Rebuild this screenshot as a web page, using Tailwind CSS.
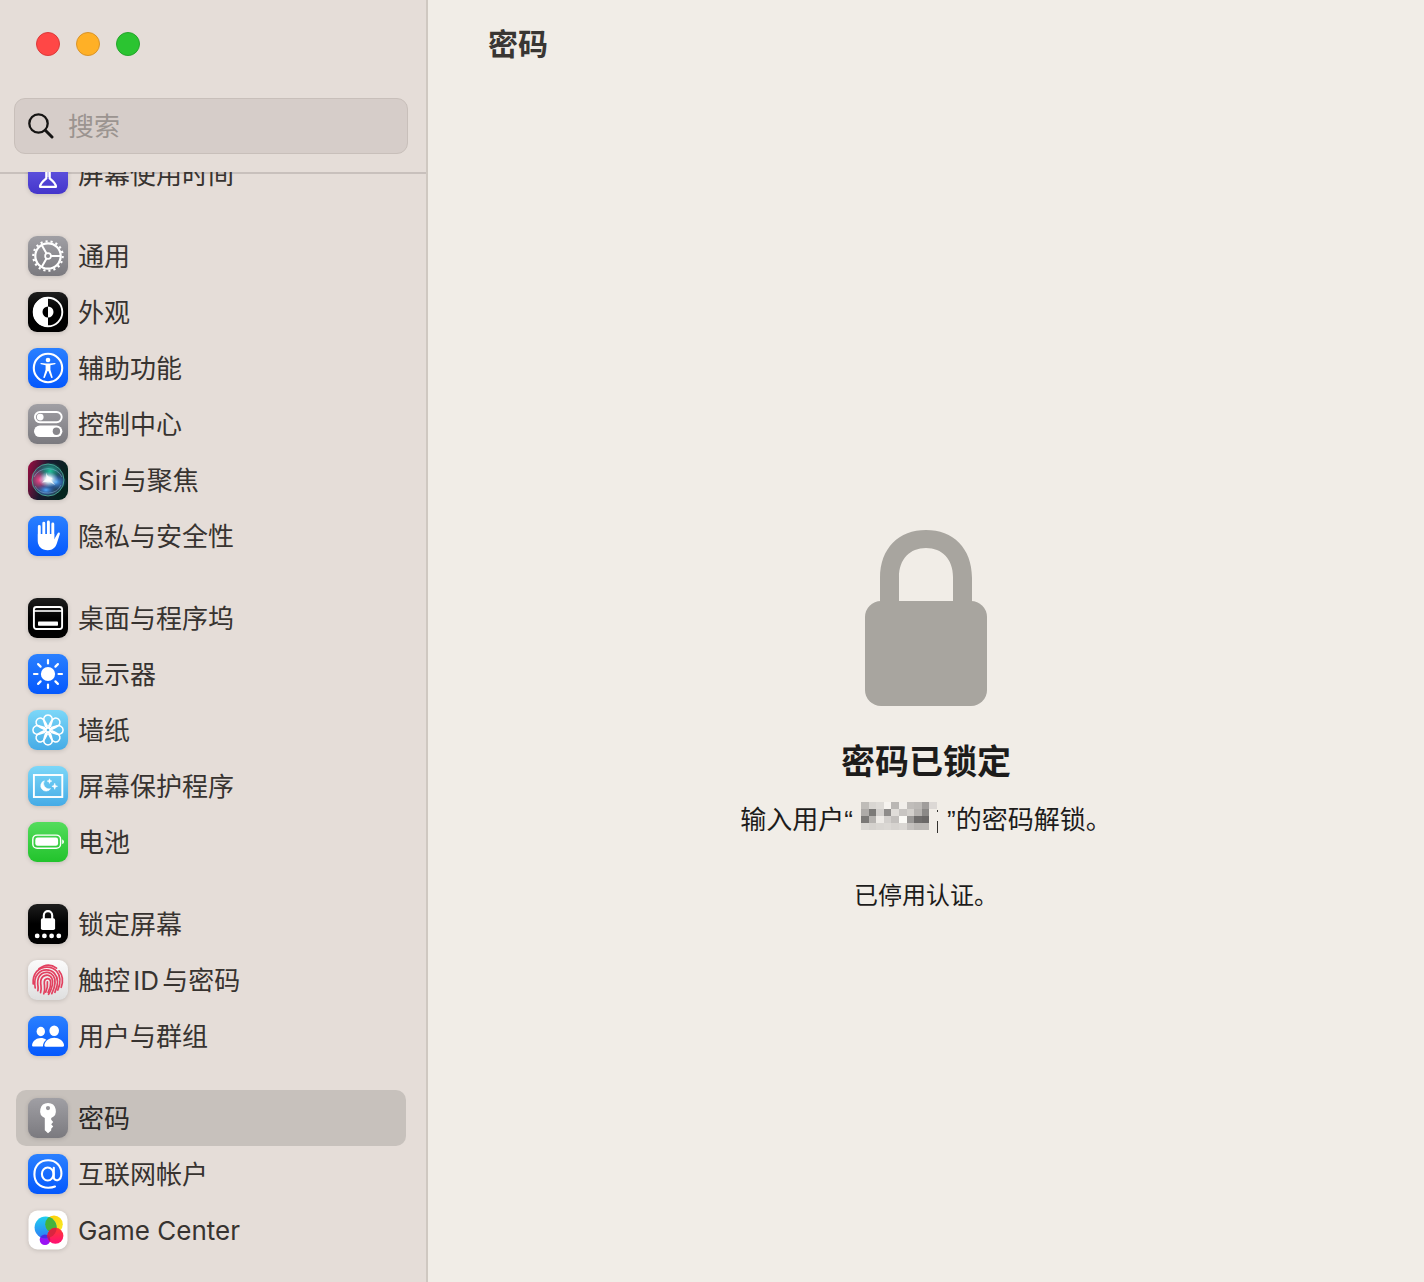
<!DOCTYPE html>
<html lang="zh-CN">
<head>
  <meta charset="UTF-8">
  <meta name="viewport" content="width=device-width, initial-scale=1.0">
  <title>密码</title>
  <script src="https://cdn.jsdelivr.net/npm/@tailwindcss/browser@4"></script>
</head>
<body class="flex h-screen overflow-hidden bg-[#f1ede7] font-['Inter','Noto_Sans_CJK_SC',sans-serif] text-[#1d1c1b]">

  <!-- Shared icon gradients -->
  <svg class="absolute size-0" aria-hidden="true">
    <defs>
      <linearGradient id="gray" x2="0" y2="1"><stop stop-color="#a09fa4"/><stop offset="1" stop-color="#7b7a7f"/></linearGradient>
      <linearGradient id="black" x2="0" y2="1"><stop stop-color="#1e1e1e"/><stop offset=".5" stop-color="#000"/></linearGradient>
      <linearGradient id="blue" x2="0" y2="1"><stop stop-color="#2a80ff"/><stop offset="1" stop-color="#0458fd"/></linearGradient>
      <linearGradient id="sky" x2="0" y2="1"><stop stop-color="#7cd7f8"/><stop offset="1" stop-color="#45abe6"/></linearGradient>
      <linearGradient id="green" x2="0" y2="1"><stop stop-color="#53dc5c"/><stop offset="1" stop-color="#22c32c"/></linearGradient>
      <linearGradient id="light" x2="0" y2="1"><stop stop-color="#fbfbfb"/><stop offset="1" stop-color="#dfdfdf"/></linearGradient>
      <linearGradient id="indigo" x2="0" y2="1"><stop stop-color="#6d63e8"/><stop offset="1" stop-color="#4435cb"/></linearGradient>
      <linearGradient id="siri" y2=".3"><stop stop-color="#a10d42"/><stop offset=".5" stop-color="#1a1a30"/><stop offset="1" stop-color="#04251f"/></linearGradient>
      <radialGradient id="glow"><stop stop-color="#fff"/><stop offset=".35" stop-color="#e8fbff" stop-opacity=".9"/><stop offset="1" stop-color="#9fd8ff" stop-opacity="0"/></radialGradient>
      <radialGradient id="pink"><stop stop-color="#ff4d90"/><stop offset="1" stop-color="#e0246b" stop-opacity="0"/></radialGradient>
      <radialGradient id="teal"><stop stop-color="#1fc79b"/><stop offset="1" stop-color="#128f76" stop-opacity="0"/></radialGradient>
      <radialGradient id="azure"><stop stop-color="#52a9fb"/><stop offset="1" stop-color="#2355c8" stop-opacity="0"/></radialGradient>
      <linearGradient id="gcBlue" x2="0" y2="1"><stop stop-color="#1fd0ef"/><stop offset="1" stop-color="#2f7bf6"/></linearGradient>
      <linearGradient id="gcYellow" x2="1" y2="1"><stop stop-color="#ffc800"/><stop offset="1" stop-color="#f6ee2a"/></linearGradient>
      <linearGradient id="gcRed" x2="0" y2="1"><stop stop-color="#ff3b30"/><stop offset="1" stop-color="#ff0f75"/></linearGradient>
    </defs>
  </svg>

  <!-- Sidebar -->
  <aside class="flex w-[428px] shrink-0 flex-col border-r-2 border-[#cfc8c1] bg-[#e5ddd8]">
    <div class="flex gap-4 px-9 pt-8">
      <button aria-label="关闭" class="size-6 rounded-full border border-[#dc3a3a] bg-[#ff4746]"></button>
      <button aria-label="最小化" class="size-6 rounded-full border border-[#d9942a] bg-[#ffb026]"></button>
      <button aria-label="缩放" class="size-6 rounded-full border border-[#25a52c] bg-[#2bc431]"></button>
    </div>

    <label class="mt-[42px] mr-[18px] mb-[18px] ml-[14px] flex h-14 items-center gap-[14px] rounded-[11px] border border-[#c8bfba] bg-[#d6cdc9] px-[13px]">
      <svg class="size-[26px] shrink-0" viewBox="0 0 26 26" fill="none" stroke="#151413" stroke-linecap="round" aria-hidden="true">
        <circle cx="10.500" cy="10.500" r="9.200" stroke-width="2.300"/>
        <path d="M17.300 17.300 24 24" stroke-width="3"/>
      </svg>
      <input type="text" aria-label="搜索" placeholder="搜索" class="w-full min-w-0 bg-transparent text-[26px] outline-none placeholder:text-[#9b9490]">
    </label>

    <nav class="min-h-0 flex-1 overflow-hidden text-[26px] leading-9 text-[#373330] shadow-[inset_0_2px_0_#c8c0bc] [text-autospace:normal]">
      <ul class="-mt-[26px] mr-5 ml-4">
        <li>
          <a href="#" class="flex h-14 items-center gap-[10px] rounded-[10px] px-3">
            <svg class="size-10 shrink-0 drop-shadow-sm" viewBox="0 0 40 40" aria-hidden="true">
              <rect width="40" height="40" rx="9" fill="url(#indigo)"/>
              <path d="M12.500 7h15c-.5 3-3 5-5.800 7.500v10c2.500 2 6 4.500 6.300 8.300H12c.3-3.800 3.800-6.300 6.300-8.300v-10C15.500 12 13 10 12.500 7z" fill="none" stroke="#fff" stroke-width="2.200" stroke-linejoin="round"/>
              <path d="M20 14v9" stroke="#fff" stroke-width="1"/>
            </svg>
            <span class="pt-0.5">屏幕使用时间</span>
          </a>
        </li>
      </ul>

      <ul class="mt-[26px] mr-5 ml-4">
        <li>
          <a href="#" class="flex h-14 items-center gap-[10px] rounded-[10px] px-3">
            <svg class="size-10 shrink-0 drop-shadow-sm" viewBox="0 0 40 40" aria-hidden="true">
              <rect width="40" height="40" rx="9" fill="url(#gray)"/>
              <g fill="none" stroke="#fff">
                <circle cx="20" cy="20" r="12.700" stroke-width="2.200"/>
                <circle cx="20" cy="20" r="14.700" stroke-width="2.200" pathLength="72" stroke-dasharray="1.700 2.300"/>
                <circle cx="20" cy="20" r="2.900" stroke-width="1.700"/>
                <path d="M23 20h9.500M18.500 17.400 13.800 9.200M18.500 22.600l-4.700 8.200" stroke-width="2"/>
              </g>
            </svg>
            <span class="pt-0.5">通用</span>
          </a>
        </li>
        <li>
          <a href="#" class="flex h-14 items-center gap-[10px] rounded-[10px] px-3">
            <svg class="size-10 shrink-0 drop-shadow-sm" viewBox="0 0 40 40" aria-hidden="true">
              <rect width="40" height="40" rx="9" fill="url(#black)"/>
              <circle cx="20" cy="20" r="14.300" fill="none" stroke="#fff" stroke-width="1.900"/>
              <path d="M20 5v9.500a5.500 5.500 0 0 0 0 11V35a15 15 0 0 1 0-30z" fill="#fff"/>
              <path d="M20 14.500a5.500 5.500 0 0 1 0 11z" fill="#fff"/>
            </svg>
            <span class="pt-0.5">外观</span>
          </a>
        </li>
        <li>
          <a href="#" class="flex h-14 items-center gap-[10px] rounded-[10px] px-3">
            <svg class="size-10 shrink-0 drop-shadow-sm" viewBox="0 0 40 40" aria-hidden="true">
              <rect width="40" height="40" rx="9" fill="url(#blue)"/>
              <circle cx="20" cy="20" r="14.200" fill="none" stroke="#fff" stroke-width="2.100"/>
              <circle cx="20" cy="12" r="2.300" fill="#fff"/>
              <path d="M13.200 14.900 18 15.500h4l4.800-.6c1-.1 1.100 1.100.2 1.300l-4.600 1.100v4.400l2.200 7.200c.3 1.100-1.100 1.500-1.500.5L20.400 23h-.8l-2.700 6.400c-.4 1-1.800.6-1.500-.5l2.200-7.200v-4.400L13 16.200c-.9-.2-.8-1.400.2-1.300z" fill="#fff"/>
            </svg>
            <span class="pt-0.5">辅助功能</span>
          </a>
        </li>
        <li>
          <a href="#" class="flex h-14 items-center gap-[10px] rounded-[10px] px-3">
            <svg class="size-10 shrink-0 drop-shadow-sm" viewBox="0 0 40 40" aria-hidden="true">
              <rect width="40" height="40" rx="9" fill="url(#gray)"/>
              <rect x="6.900" y="8" width="26.800" height="10.200" rx="5.100" fill="none" stroke="#fff" stroke-width="1.900"/>
              <circle cx="12.200" cy="13.100" r="3.400" fill="#fff"/>
              <rect x="6" y="21.500" width="28.400" height="11.600" rx="5.800" fill="#fff"/>
              <circle cx="28.400" cy="27.300" r="3.700" fill="#87868b"/>
            </svg>
            <span class="pt-0.5">控制中心</span>
          </a>
        </li>
        <li>
          <a href="#" class="flex h-14 items-center gap-[10px] rounded-[10px] px-3">
            <svg class="size-10 shrink-0 drop-shadow-sm" viewBox="0 0 40 40" aria-hidden="true">
              <rect width="40" height="40" rx="9" fill="url(#siri)"/>
              <circle cx="20" cy="20" r="16" fill="#2f5068" fill-opacity=".75"/>
              <ellipse cx="12" cy="20" rx="11" ry="11" fill="url(#pink)"/>
              <ellipse cx="22" cy="11" rx="12" ry="9" fill="url(#teal)"/>
              <ellipse cx="28" cy="22" rx="11" ry="8" fill="url(#azure)"/>
              <ellipse cx="18" cy="30" rx="10" ry="6" fill="url(#azure)"/>
              <circle cx="20" cy="20" r="16" fill="none" stroke="#4fb8a0" stroke-opacity=".8"/>
              <path d="M6 17a15 13 0 0 1 28 0M7 26a14 12 0 0 0 26-1" fill="none" stroke="#8bb5dd" stroke-opacity=".5"/>
              <ellipse cx="20.500" cy="19.500" rx="10" ry="8" fill="url(#glow)"/>
              <path d="M18 12.500c1 3.500 3 5 6.500 5.500l-1.500 2 4 5-6-3.500-7 1 4.500-4z" fill="#fff" fill-opacity=".8"/>
            </svg>
            <span class="pt-0.5">Siri与聚焦</span>
          </a>
        </li>
        <li>
          <a href="#" class="flex h-14 items-center gap-[10px] rounded-[10px] px-3">
            <svg class="size-10 shrink-0 drop-shadow-sm" viewBox="0 0 40 40" aria-hidden="true">
              <rect width="40" height="40" rx="9" fill="url(#blue)"/>
              <path d="M11.300 20v6.500M11.300 10.500V22M15.800 7.200V22M20.400 6V22M24.800 8V22" fill="none" stroke="#fff" stroke-width="2.900" stroke-linecap="round"/>
              <path d="M9.850 18h16.400v5.200l3.300-5.800c.8-1.400 2.700-.9 2.300.7L29.300 26c-1.300 5.300-4.400 8.200-9.500 8.200-6.300 0-9.950-4-9.950-9.800z" fill="#fff"/>
            </svg>
            <span class="pt-0.5">隐私与安全性</span>
          </a>
        </li>
      </ul>

      <ul class="mt-[26px] mr-5 ml-4">
        <li>
          <a href="#" class="flex h-14 items-center gap-[10px] rounded-[10px] px-3">
            <svg class="size-10 shrink-0 drop-shadow-sm" viewBox="0 0 40 40" aria-hidden="true">
              <rect width="40" height="40" rx="9" fill="url(#black)"/>
              <rect x="5.900" y="9" width="28.200" height="22" rx="2.500" fill="none" stroke="#fff" stroke-width="1.900"/>
              <path d="M6 13h28" stroke="#fff" stroke-width="1.600"/>
              <rect x="10" y="23.400" width="20" height="4.400" rx=".8" fill="#fff"/>
            </svg>
            <span class="pt-0.5">桌面与程序坞</span>
          </a>
        </li>
        <li>
          <a href="#" class="flex h-14 items-center gap-[10px] rounded-[10px] px-3">
            <svg class="size-10 shrink-0 drop-shadow-sm" viewBox="0 0 40 40" aria-hidden="true">
              <rect width="40" height="40" rx="9" fill="url(#blue)"/>
              <circle cx="20" cy="20" r="7.100" fill="#fff"/>
              <path d="M20 6v3.500M20 30.500V34M6 20h3.500M30.500 20H34M10.100 10.100l2.500 2.500M27.400 27.400l2.500 2.500M29.900 10.100l-2.500 2.500M12.600 27.400l-2.500 2.500" stroke="#fff" stroke-width="2.200" stroke-linecap="round"/>
            </svg>
            <span class="pt-0.5">显示器</span>
          </a>
        </li>
        <li>
          <a href="#" class="flex h-14 items-center gap-[10px] rounded-[10px] px-3">
            <svg class="size-10 shrink-0 drop-shadow-sm" viewBox="0 0 40 40" aria-hidden="true">
              <defs><path id="petal" d="M17.800 17 16.300 12.500C14.300 8 17 4.900 20 4.900s5.700 3.100 3.700 7.600L22.200 17M16.500 12.500 21.500 21M23.500 12.500 18.500 21"/></defs>
              <rect width="40" height="40" rx="9" fill="url(#sky)"/>
              <g fill="none" stroke="#fff" stroke-width="1.500">
                <use href="#petal"/>
                <use href="#petal" transform="rotate(45 20 20)"/>
                <use href="#petal" transform="rotate(90 20 20)"/>
                <use href="#petal" transform="rotate(135 20 20)"/>
                <use href="#petal" transform="rotate(180 20 20)"/>
                <use href="#petal" transform="rotate(225 20 20)"/>
                <use href="#petal" transform="rotate(270 20 20)"/>
                <use href="#petal" transform="rotate(315 20 20)"/>
              </g>
              <circle cx="20" cy="20" r="1.300" fill="#5dbdec"/>
            </svg>
            <span class="pt-0.5">墙纸</span>
          </a>
        </li>
        <li>
          <a href="#" class="flex h-14 items-center gap-[10px] rounded-[10px] px-3">
            <svg class="size-10 shrink-0 drop-shadow-sm" viewBox="0 0 40 40" aria-hidden="true">
              <rect width="40" height="40" rx="9" fill="url(#sky)"/>
              <rect x="5.900" y="9" width="28.400" height="22" fill="none" stroke="#fff" stroke-width="1.900"/>
              <path d="M16.300 14.800a5.300 5.300 0 1 0 6.200 7.900 5.400 5.400 0 0 1-6.200-7.900zM21.500 12.800l.6 1.700 1.700.6-1.700.6-.6 1.700-.6-1.700-1.700-.6 1.700-.6zM26.700 17.300l.7 2.300 2.100.7-2.100.7-.7 2.300-.7-2.300-2.100-.7 2.100-.7z" fill="#fff" stroke="#fff" stroke-width=".6"/>
            </svg>
            <span class="pt-0.5">屏幕保护程序</span>
          </a>
        </li>
        <li>
          <a href="#" class="flex h-14 items-center gap-[10px] rounded-[10px] px-3">
            <svg class="size-10 shrink-0 drop-shadow-sm" viewBox="0 0 40 40" aria-hidden="true">
              <rect width="40" height="40" rx="9" fill="url(#green)"/>
              <rect x="4.800" y="13.100" width="27.800" height="13.200" rx="4.300" fill="none" stroke="#fff" stroke-width="1.400"/>
              <rect x="7.300" y="15.600" width="22.800" height="8.200" rx="2.300" fill="#fff"/>
              <path d="M34.200 17.400c2.300.6 2.300 4 0 4.600z" fill="#fff"/>
            </svg>
            <span class="pt-0.5">电池</span>
          </a>
        </li>
      </ul>

      <ul class="mt-[26px] mr-5 ml-4">
        <li>
          <a href="#" class="flex h-14 items-center gap-[10px] rounded-[10px] px-3">
            <svg class="size-10 shrink-0 drop-shadow-sm" viewBox="0 0 40 40" aria-hidden="true">
              <rect width="40" height="40" rx="9" fill="url(#black)"/>
              <path d="M15.800 15v-3.500c0-5.900 8.400-5.900 8.400 0V15" fill="none" stroke="#fff" stroke-width="2.100"/>
              <rect x="12.900" y="14.300" width="14.200" height="11.700" rx="1.800" fill="#fff"/>
              <g fill="#fff"><circle cx="9.200" cy="31.900" r="2.400"/><circle cx="16.400" cy="31.900" r="2.400"/><circle cx="23.600" cy="31.900" r="2.400"/><circle cx="30.800" cy="31.900" r="2.400"/></g>
            </svg>
            <span class="pt-0.5">锁定屏幕</span>
          </a>
        </li>
        <li>
          <a href="#" class="flex h-14 items-center gap-[10px] rounded-[10px] px-3">
            <svg class="size-10 shrink-0 drop-shadow-sm" viewBox="0 0 40 40" aria-hidden="true">
              <rect width="40" height="40" rx="9" fill="url(#light)"/>
              <g fill="none" stroke="#e2405f" stroke-width="1.700" stroke-linecap="round">
                <path d="M11 8.700C17.500 3.800 24 4.600 28.500 8.200M31 10.800c4 4.900 4.500 10.200 2.200 16.500"/>
                <path d="M5.200 24c-.5-5 .8-9.300 3.600-12.700C14.500 5.500 24 6 28.700 11.200c3.900 4.600 4.200 11.300 1.100 18.800"/>
                <path d="M7.200 27.800C6 21.500 7 16.800 10 13.600c4.500-5 12.300-4.700 16.400-.3 4 4.400 4 11.200.5 19"/>
                <path d="M9.900 30.600c.7-3 0-4.300-.2-6.600-.4-5 1-8.300 4-10.300 3.900-2.600 9-1.400 11.600 2 2.800 4 2.200 10.200-1.500 18"/>
                <path d="M12.600 32.600c1.300-4 .3-6.400.1-9.300-.3-4.200 1.400-6.600 4-7.700 3-1.200 6 .2 7.200 2.700 1.700 3.800.4 9.500-3.300 16"/>
                <path d="M15.800 33.800c1.600-4 .8-7 .5-10.200-.6-6 6-6.800 6.400-1.500.2 3.800-1 7.400-2.600 10.400"/>
                <path d="M19.400 21.800c.5 3.800-.2 7-1.700 10.400"/>
              </g>
            </svg>
            <span class="pt-0.5">触控ID与密码</span>
          </a>
        </li>
        <li>
          <a href="#" class="flex h-14 items-center gap-[10px] rounded-[10px] px-3">
            <svg class="size-10 shrink-0 drop-shadow-sm" viewBox="0 0 40 40" aria-hidden="true">
              <rect width="40" height="40" rx="9" fill="url(#blue)"/>
              <g fill="#fff">
                <ellipse cx="12.800" cy="15.500" rx="4.200" ry="4.700"/>
                <ellipse cx="26.200" cy="14.800" rx="4.800" ry="5.200"/>
                <path d="M5.500 30.500c-1.200 0-1.600-.8-1.400-1.800.8-3.800 4.400-6.600 8.700-6.600 2.100 0 4 .6 5.500 1.700-2 1.600-3.200 3.600-3.400 6.700z"/>
                <path d="M17.800 30.800c-1.200 0-1.600-.9-1.400-2 .8-4.100 4.900-7 9.800-7s9 2.900 9.800 7c.2 1.100-.2 2-1.400 2z"/>
              </g>
            </svg>
            <span class="pt-0.5">用户与群组</span>
          </a>
        </li>
      </ul>

      <ul class="mt-[26px] mr-5 ml-4">
        <li>
          <a href="#" aria-current="page" class="flex h-14 items-center gap-[10px] rounded-[10px] bg-[#c7c1bc] px-3 text-[#2c2927]">
            <svg class="size-10 shrink-0 drop-shadow-sm" viewBox="0 0 40 40" aria-hidden="true">
              <rect width="40" height="40" rx="9" fill="url(#gray)"/>
              <path fill-rule="evenodd" d="M20 5a7.900 7.900 0 0 1 3.200 15.100v1.700l2 2.200-2 2.300 2 2.200-2 2.200v1.800L20 35.300l-3.200-3V20.100A7.900 7.900 0 0 1 20 5zm0 3a2.100 2.100 0 1 0 0 4.200A2.100 2.100 0 0 0 20 8z" fill="#fff"/>
            </svg>
            <span class="pt-0.5">密码</span>
          </a>
        </li>
        <li>
          <a href="#" class="flex h-14 items-center gap-[10px] rounded-[10px] px-3">
            <svg class="size-10 shrink-0 drop-shadow-sm" viewBox="0 0 40 40" aria-hidden="true">
              <rect width="40" height="40" rx="9" fill="url(#blue)"/>
              <g fill="none" stroke="#fff" stroke-width="2.100" stroke-linecap="round">
                <ellipse cx="19.700" cy="20" rx="5.800" ry="6.500"/>
                <path d="M25.800 13.800v9.400c0 4.500 7.600 4.600 7.600-3.600C33.400 11.600 27.800 6.300 20.200 6.300 12 6.300 6.400 11.800 6.400 20.200c0 8.300 5.400 13.500 13.800 13.500 2.800 0 5-.4 6.800-1.200"/>
              </g>
            </svg>
            <span class="pt-0.5">互联网帐户</span>
          </a>
        </li>
        <li>
          <a href="#" class="flex h-14 items-center gap-[10px] rounded-[10px] px-3">
            <svg class="size-10 shrink-0 drop-shadow-sm" viewBox="0 0 40 40" aria-hidden="true">
              <defs>
                <clipPath id="inBlue"><circle cx="17.600" cy="17.500" r="11"/></clipPath>
                <clipPath id="inRed"><circle cx="27.400" cy="25.800" r="8"/></clipPath>
              </defs>
              <rect x=".5" y=".5" width="39" height="39" rx="9" fill="#fff"/>
              <circle cx="17" cy="29.800" r="5.300" fill="#9a12f4"/>
              <circle cx="26" cy="14.300" r="8.800" fill="url(#gcYellow)"/>
              <circle cx="17.600" cy="17.500" r="11" fill="url(#gcBlue)"/>
              <circle cx="17" cy="29.800" r="5.300" fill="#4a2be0" clip-path="url(#inBlue)"/>
              <circle cx="26" cy="14.300" r="8.800" fill="#45b33c" clip-path="url(#inBlue)"/>
              <circle cx="27.400" cy="25.800" r="8" fill="url(#gcRed)"/>
              <circle cx="17.600" cy="17.500" r="11" fill="#d9253f" clip-path="url(#inRed)"/>
              <circle cx="17" cy="29.800" r="5.300" fill="#c4106e" clip-path="url(#inRed)"/>
            </svg>
            <span class="pt-0.5">Game Center</span>
          </a>
        </li>
      </ul>
    </nav>
  </aside>

  <!-- Content -->
  <main class="flex min-w-0 flex-1 flex-col">
    <header class="flex h-[88px] shrink-0 items-center px-15">
      <h1 class="text-[30px] font-bold text-[#393633]">密码</h1>
    </header>

    <section class="flex flex-1 flex-col items-center justify-center pt-[74px] text-center">
      <svg class="h-[176px] w-[122px]" viewBox="0 0 122 176" role="img" aria-label="已锁定">
        <path d="M15 78V48C15 18 34 0 61 0s46 18 46 48v30H88V47c0-18-11-29-27-29S34 29 34 47v31z" fill="#a8a59f"/>
        <rect y="71" width="122" height="105" rx="16" fill="#a8a59f"/>
      </svg>
      <h2 class="mt-[34px] text-[34px] leading-[44px] font-bold">密码已锁定</h2>
      <p class="mt-[18px] flex font-['Liberation_Sans','Noto_Sans_CJK_SC',sans-serif] text-[26px] leading-9">
        <span>输入用户“</span>
        <!-- Redacted user name -->
        <svg class="mr-1.5 ml-2 h-8 w-[80px]" viewBox="0 0 80 32" shape-rendering="crispEdges" role="img" aria-label="用户名已隐藏">
          <g id="mosaic"></g>
          <path d="M76.500 8v2M76.500 19v12" stroke="#34322f"/>
        </svg>
        <span>”的密码解锁。</span>
      </p>
      <p class="mt-10 text-[24px] leading-9">已停用认证。</p>
    </section>
  </main>

  <script>
    const shades = [
      ['#bfbcb8', '#d9d6d2', '#dedbd7', '#f6f3ef', '#bab7b4', '#f1eeea', '#c0bdba', '#bcb9b6', '#a09d9b', '#dcd8d5'],
      ['#aeaba8', '#7c7a78', '#d3d0cd', '#8e8c8a', '#e0ddd9', '#c8c5c2', '#d3d0cc', '#b5b2af', '#8b8987'],
      ['#7b7977', '#b6b3b0', '#eeebe7', '#d3d0cd', '#c3c0bd', '#fbfaf6', '#9a9896', '#6f6d6c', '#6a6867'],
      ['#dad7d3', '#d5d2ce', '#d9d6d2', '#dbd8d4', '#d6d3cf', '#dad7d3', '#c4c1be', '#bab7b4', '#bbb8b5'],
    ];
    const mosaic = document.getElementById('mosaic');
    shades.forEach((row, y) => row.forEach((fill, x) => {
      const cell = document.createElementNS('http://www.w3.org/2000/svg', 'rect');
      cell.setAttribute('x', x * 7.6);
      cell.setAttribute('y', y * 7);
      cell.setAttribute('width', 7.6);
      cell.setAttribute('height', 7);
      cell.setAttribute('fill', fill);
      mosaic.appendChild(cell);
    }));
  </script>
</body>
</html>
